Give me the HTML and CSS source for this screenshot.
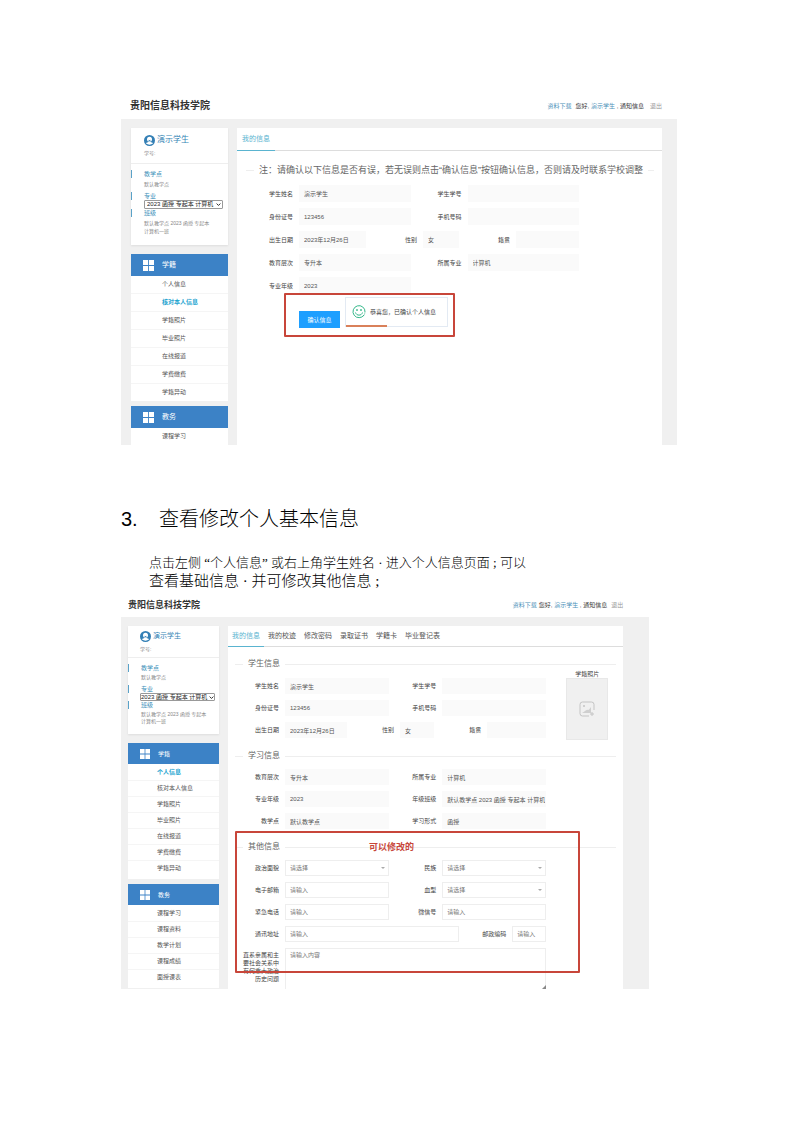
FILE: index.html
```html
<!DOCTYPE html>
<html lang="zh-CN">
<head>
    <meta charset="UTF-8">
    <meta name="viewport" content="width=device-width, initial-scale=1.0">
    <title>查看修改个人基本信息</title>
    <link rel="stylesheet" href="styles.css">
</head>
<body>

<!-- Confirm information -->
<section class="shot">
    <div class="header">
        <h2>贵阳信息科技学院</h2>
        <div class="top-links">
            <a href="#">资料下载</a>
            <span>您好, <a href="#">演示学生</a> , 通知信息</span>
            <a href="#" class="logout">退出</a>
        </div>
    </div>
    <div class="content">
        <div class="sidebar">
            <div class="user-card">
                <div class="user-top">
                    <div class="user-name">
                        <svg class="avatar" viewBox="0 0 22 22"><circle cx="11" cy="11" r="11" fill="#337fb5"/><circle cx="11" cy="8.500" r="5" fill="#fff"/><path d="M4 17c1-4 13-4 14 0-4 3-10 3-14 0z" fill="#fff"/><path d="M8 9.500c2 .5 4 .5 6 0-1 3-5 3-6 0z" fill="#337fb5"/></svg>
                        演示学生
                    </div>
                    <p>学号:</p>
                </div>
                <div class="user-info">
                    <h4>教学点</h4>
                    <p>默认教学点</p>
                    <h4><label for="major1">专业</label></h4>
                    <div class="major">
                        <select id="major1"><option>2023 函授 专起本 计算机</option></select>
                        <svg viewBox="0 0 8 8"><path d="M1 2.500l3 3 3-3" fill="none" stroke="#222" stroke-width="1.500"/></svg>
                    </div>
                    <h4 class="class-title">班级</h4>
                    <p class="class-name">默认教学点 2023 函授 专起本<br>计算机一班</p>
                </div>
            </div>
            <div class="menu">
                <h3><svg viewBox="0 0 10 10"><path d="M0 0h4.600v4.600H0zM5.400 0H10v4.600H5.400zM0 5.400h4.600V10H0zM5.400 5.400H10V10H5.400z" fill="#fff"/></svg>学籍</h3>
                <ul>
                    <li><a href="#">个人信息</a></li>
                    <li><a href="#" class="active">核对本人信息</a></li>
                    <li><a href="#">学籍照片</a></li>
                    <li><a href="#">毕业照片</a></li>
                    <li><a href="#">在线报道</a></li>
                    <li><a href="#">学费缴费</a></li>
                    <li><a href="#">学籍异动</a></li>
                </ul>
            </div>
            <div class="menu">
                <h3><svg viewBox="0 0 10 10"><path d="M0 0h4.600v4.600H0zM5.400 0H10v4.600H5.400zM0 5.400h4.600V10H0zM5.400 5.400H10V10H5.400z" fill="#fff"/></svg>教务</h3>
                <ul>
                    <li><a href="#">课程学习</a></li>
                </ul>
            </div>
        </div>
        <div class="main">
            <div class="tabs">
                <a href="#" class="active">我的信息</a>
            </div>
            <div class="legend notice"><span>注：请确认以下信息是否有误，若无误则点击“确认信息”按钮确认信息，否则请及时联系学校调整</span></div>
            <form class="form">
                <div class="row">
                    <label for="c-name">学生姓名</label><input id="c-name" type="text" value="演示学生" readonly>
                    <label for="c-no">学生学号</label><input id="c-no" type="text" readonly>
                </div>
                <div class="row">
                    <label for="c-card">身份证号</label><input id="c-card" type="text" value="123456" readonly>
                    <label for="c-phone">手机号码</label><input id="c-phone" type="text" readonly>
                </div>
                <div class="row row-three">
                    <label for="c-birth">出生日期</label><input id="c-birth" type="text" value="2023年12月26日" readonly>
                    <label for="c-sex">性别</label><input id="c-sex" type="text" value="女" readonly>
                    <label for="c-place">籍贯</label><input id="c-place" type="text" readonly>
                </div>
                <div class="row">
                    <label for="c-level">教育层次</label><input id="c-level" type="text" value="专升本" readonly>
                    <label for="c-major">所属专业</label><input id="c-major" type="text" value="计算机" readonly>
                </div>
                <div class="row">
                    <label for="c-grade">专业年级</label><input id="c-grade" type="text" value="2023" readonly>
                </div>
                <div class="confirm">
                    <button type="button">确认信息</button>
                    <div class="toast">
                        <svg viewBox="0 0 28 28" fill="none" stroke="#35b88a" stroke-width="2"><path d="M24 20A12 12 0 1 1 26 14"/><path d="M26 14a12 12 0 0 1-4 9" stroke-width="1"/><path d="M7 15c2 7 12 7 14 0" /><circle cx="10" cy="10" r="1" fill="#35b88a"/><circle cx="18" cy="10" r="1" fill="#35b88a"/></svg>
                        恭喜您，已确认个人信息
                    </div>
                    <div class="mark mark-confirm"></div>
                </div>
            </form>
        </div>
    </div>
</section>

<h1><span>3.</span>查看修改个人基本信息</h1>
<div class="intro">
    <p>点击左侧 “个人信息” 或右上角学生姓名 · 进入个人信息页面 ; 可以</p>
    <p class="wide">查看基础信息 · 并可修改其他信息 ;</p>
</div>

<!-- Personal information -->
<section class="shot shot-small">
    <div class="header">
        <h2>贵阳信息科技学院</h2>
        <div class="top-links">
            <a href="#">资料下载</a>
            <span>您好, <a href="#">演示学生</a> , 通知信息</span>
            <a href="#" class="logout">退出</a>
        </div>
    </div>
    <div class="content">
        <div class="sidebar">
            <div class="user-card">
                <div class="user-top">
                    <div class="user-name">
                        <svg class="avatar" viewBox="0 0 22 22"><circle cx="11" cy="11" r="11" fill="#337fb5"/><circle cx="11" cy="8.500" r="5" fill="#fff"/><path d="M4 17c1-4 13-4 14 0-4 3-10 3-14 0z" fill="#fff"/><path d="M8 9.500c2 .5 4 .5 6 0-1 3-5 3-6 0z" fill="#337fb5"/></svg>
                        演示学生
                    </div>
                    <p>学号:</p>
                </div>
                <div class="user-info">
                    <h4>教学点</h4>
                    <p>默认教学点</p>
                    <h4><label for="major2">专业</label></h4>
                    <div class="major">
                        <select id="major2"><option>2023 函授 专起本 计算机</option></select>
                        <svg viewBox="0 0 8 8"><path d="M1 2.500l3 3 3-3" fill="none" stroke="#222" stroke-width="1.500"/></svg>
                    </div>
                    <h4 class="class-title">班级</h4>
                    <p class="class-name">默认教学点 2023 函授 专起本<br>计算机一班</p>
                </div>
            </div>
            <div class="menu">
                <h3><svg viewBox="0 0 10 10"><path d="M0 0h4.600v4.600H0zM5.400 0H10v4.600H5.400zM0 5.400h4.600V10H0zM5.400 5.400H10V10H5.400z" fill="#fff"/></svg>学籍</h3>
                <ul>
                    <li><a href="#" class="active">个人信息</a></li>
                    <li><a href="#">核对本人信息</a></li>
                    <li><a href="#">学籍照片</a></li>
                    <li><a href="#">毕业照片</a></li>
                    <li><a href="#">在线报道</a></li>
                    <li><a href="#">学费缴费</a></li>
                    <li><a href="#">学籍异动</a></li>
                </ul>
            </div>
            <div class="menu">
                <h3><svg viewBox="0 0 10 10"><path d="M0 0h4.600v4.600H0zM5.400 0H10v4.600H5.400zM0 5.400h4.600V10H0zM5.400 5.400H10V10H5.400z" fill="#fff"/></svg>教务</h3>
                <ul>
                    <li><a href="#">课程学习</a></li>
                    <li><a href="#">课程资料</a></li>
                    <li><a href="#">教学计划</a></li>
                    <li><a href="#">课程成绩</a></li>
                    <li><a href="#">面授课表</a></li>
                </ul>
            </div>
        </div>
        <div class="main">
            <div class="tabs">
                <a href="#" class="active">我的信息</a>
                <a href="#">我的校迹</a>
                <a href="#">修改密码</a>
                <a href="#">录取证书</a>
                <a href="#">学籍卡</a>
                <a href="#">毕业登记表</a>
            </div>
            <div class="legend"><span>学生信息</span></div>
            <div class="student">
                <form class="form">
                    <div class="row">
                        <label for="p-name">学生姓名</label><input id="p-name" type="text" value="演示学生" readonly>
                        <label for="p-no">学生学号</label><input id="p-no" type="text" readonly>
                    </div>
                    <div class="row">
                        <label for="p-card">身份证号</label><input id="p-card" type="text" value="123456" readonly>
                        <label for="p-phone">手机号码</label><input id="p-phone" type="text" readonly>
                    </div>
                    <div class="row row-three">
                        <label for="p-birth">出生日期</label><input id="p-birth" type="text" value="2023年12月26日" readonly>
                        <label for="p-sex">性别</label><input id="p-sex" type="text" value="女" readonly>
                        <label for="p-place">籍贯</label><input id="p-place" type="text" readonly>
                    </div>
                </form>
                <div class="photo">
                    <p>学籍照片</p>
                    <div class="photo-box">
                        <svg viewBox="0 0 16 16" fill="none" stroke="#c4c4c4"><path d="M15 9V3.500A2.500 2.500 0 0 0 12.500 1h-9A2.500 2.500 0 0 0 1 3.500v9A2.500 2.500 0 0 0 3.500 15H10"/><path d="M3 12c3-1 4-4 6-3 1 0 2-2 3-3v6z" fill="#cfcfcf" stroke="none"/><circle cx="5" cy="5" r="1" fill="#c4c4c4" stroke="none"/><path d="M13 11v4M11 13h4"/></svg>
                    </div>
                </div>
            </div>
            <div class="legend"><span>学习信息</span></div>
            <form class="form">
                <div class="row">
                    <label for="p-level">教育层次</label><input id="p-level" type="text" value="专升本" readonly>
                    <label for="p-major">所属专业</label><input id="p-major" type="text" value="计算机" readonly>
                </div>
                <div class="row">
                    <label for="p-grade">专业年级</label><input id="p-grade" type="text" value="2023" readonly>
                    <label for="p-class">年级班级</label><input id="p-class" type="text" value="默认教学点 2023 函授 专起本 计算机一班" readonly>
                </div>
                <div class="row">
                    <label for="p-site">教学点</label><input id="p-site" type="text" value="默认教学点" readonly>
                    <label for="p-mode">学习形式</label><input id="p-mode" type="text" value="函授" readonly>
                </div>
            </form>
            <div class="other">
                <div class="legend"><span>其他信息</span></div>
                <form class="form">
                    <div class="row">
                        <label for="o-party">政治面貌</label>
                        <div class="drop"><select id="o-party"><option>请选择</option></select></div>
                        <label for="o-nation">民族</label>
                        <div class="drop"><select id="o-nation"><option>请选择</option></select></div>
                    </div>
                    <div class="row">
                        <label for="o-mail">电子邮箱</label><input id="o-mail" type="text" placeholder="请输入">
                        <label for="o-blood">血型</label>
                        <div class="drop"><select id="o-blood"><option>请选择</option></select></div>
                    </div>
                    <div class="row">
                        <label for="o-tel">紧急电话</label><input id="o-tel" type="text" placeholder="请输入">
                        <label for="o-wx">微信号</label><input id="o-wx" type="text" placeholder="请输入">
                    </div>
                    <div class="row row-address">
                        <label for="o-addr">通讯地址</label><input id="o-addr" type="text" placeholder="请输入">
                        <label for="o-zip">邮政编码</label><input id="o-zip" type="text" placeholder="请输入">
                    </div>
                    <div class="row row-text">
                        <label for="o-history">直系亲属和主要社会关系中有何重大政治历史问题</label>
                        <div class="area"><textarea id="o-history" placeholder="请输入内容"></textarea></div>
                    </div>
                </form>
                <div class="mark mark-other"></div>
                <div class="mark-text">可以修改的</div>
            </div>
        </div>
    </div>
</section>

</body>
</html>
```

FILE: styles.css
```css
* {
    box-sizing: border-box;
}
body {
    font-family: "Liberation Sans", "Noto Sans CJK SC", sans-serif;
    font-size: 6px;
    line-height: 8px;
    color: #555;
    background: #fff;
    margin: 0;
    padding: 93px 116px 60px 121px;
}
h1, h2, h3, h4, p, ul {
    margin: 0;
    padding: 0;
}
a {
    color: inherit;
    text-decoration: none;
}
input, select, textarea, button {
    font: inherit;
    color: #555;
    margin: 0;
}

/* page header */
.header {
    display: flex;
    justify-content: space-between;
    align-items: center;
    height: 26px;
    padding: 0 15px 0 9px;
}
.header h2 {
    font-size: 10px;
    line-height: 12px;
    color: #333;
}
.top-links {
    display: flex;
    gap: 4px;
    color: #333;
}
.top-links a {
    color: #4a90b8;
}
.top-links .logout {
    color: #999;
    margin-left: 2px;
}
.content {
    display: flex;
    gap: 9px;
    background: #f0f0f0;
    padding: 9px 15px 0 10px;
}

/* sidebar */
.sidebar {
    flex: 0 0 97px;
}
.user-card {
    background: #fff;
    box-shadow: 0 1px 2px #ddd;
    margin-bottom: 9px;
    color: #888;
}
.user-top {
    padding: 6px 13px;
    border-bottom: 1px solid #eee;
}
.user-name {
    display: flex;
    align-items: center;
    gap: 2px;
    font-size: 8px;
    line-height: 12px;
    color: #3584b5;
}
.avatar {
    width: 11px;
    height: 11px;
}
.user-top p {
    font-size: 5px;
    margin-top: 3px;
}
.user-info {
    padding: 6px 0 10px;
}
.user-info h4 {
    font-weight: normal;
    color: #3a8fb9;
    padding-left: 12px;
    border-left: 1px solid #5aa2c8;
}
.user-info p {
    font-size: 5px;
    line-height: 7px;
    margin: 3px 0 4px 13px;
}
.user-info .class-name {
    line-height: 8px;
    margin: 2px 0 0 13px;
}
.major {
    position: relative;
    margin: 0 5px 0 13px;
}
.major select {
    display: block;
    appearance: none;
    width: 100%;
    height: 9px;
    line-height: 7px;
    padding: 0 0 0 2px;
    color: #222;
    background: #fff;
    border: 1px solid #999;
    border-radius: 1px;
}
.major svg {
    position: absolute;
    right: 2px;
    top: 2px;
    width: 5px;
    height: 5px;
}
.menu {
    margin-bottom: 5px;
}
.menu:last-child {
    margin-bottom: 0;
}
.menu h3 {
    display: flex;
    align-items: center;
    gap: 8px;
    height: 22px;
    padding-left: 12px;
    background: #3c82c6;
    color: #fff;
    font-size: 7px;
    font-weight: normal;
}
.menu h3 svg {
    width: 11px;
    height: 11px;
}
.menu ul {
    list-style: none;
    background: #fff;
}
.menu li {
    border-bottom: 1px solid #f5f5f5;
}
.menu li:last-child {
    border-bottom: none;
}
.menu li a {
    display: block;
    padding-left: 31px;
    line-height: 17px;
}
.menu .active {
    color: #1ea4cf;
    font-weight: bold;
}

/* main panel */
.main {
    flex: 1;
    min-width: 0;
    background: #fff;
}
.tabs {
    display: flex;
    height: 23px;
    border-bottom: 1px solid #ddd;
}
.tabs a {
    font-size: 7px;
    line-height: 22px;
    height: 23px;
    padding: 0 5px;
}
.tabs .active {
    color: #5ab4d0;
    border-bottom: 1px solid #5ab4d0;
}
.legend {
    display: flex;
    align-items: center;
    gap: 5px;
    font-size: 8px;
    line-height: 12px;
    margin: 12px 7px 7px;
    color: #666;
}
.legend::before, .legend::after {
    content: "";
    height: 1px;
    background: #eee;
}
.legend::before {
    width: 8px;
}
.legend::after {
    flex: 1;
}
.notice {
    font-size: 9px;
    margin: 13px 8px 9px 9px;
    white-space: nowrap;
}

/* forms */
.form {
    display: grid;
    gap: 6px;
    width: 76%;
    margin-left: 19px;
}
.row {
    display: grid;
    grid-template-columns: 37px 1fr 45px 1fr;
    gap: 6px;
    align-items: center;
}
.row-three {
    grid-template-columns: 37px 67fr 45px 36fr 45px 63fr;
}
.row label {
    text-align: right;
    color: #444;
}
.row input, .row select, .row textarea {
    display: block;
    width: 100%;
    min-width: 0;
    height: 17px;
    padding: 0 0 0 4px;
    border: 1px solid #eee;
    border-radius: 0;
    background: #fff;
    outline: none;
}
.row input[readonly] {
    background: #fafafa;
    border-color: #fafafa;
}
.row input::placeholder, .row textarea::placeholder {
    color: #777;
}
.confirm {
    position: relative;
    padding: 11px 0 0 43px;
}
.confirm button {
    display: block;
    width: 41px;
    height: 17px;
    padding: 0;
    border: none;
    background: #1e9fff;
    color: #fff;
    cursor: pointer;
}
.toast {
    position: absolute;
    left: 89px;
    top: -3px;
    display: flex;
    align-items: center;
    gap: 4px;
    width: 103px;
    height: 30px;
    padding-left: 6px;
    border: 1px solid #e3eaf3;
    background: #fff;
    white-space: nowrap;
    color: #444;
}
.toast svg {
    width: 14px;
    height: 14px;
}
.toast::after {
    content: "";
    position: absolute;
    left: 0;
    bottom: -1px;
    width: 41px;
    height: 2px;
    background: #d9805a;
}
.mark {
    position: absolute;
    border: 2px solid #c8463a;
    border-radius: 1px;
    pointer-events: none;
}
.mark-confirm {
    left: 28px;
    top: -7px;
    width: 171px;
    height: 44px;
}

/* text between the two screens */
h1 {
    display: flex;
    font-size: 20px;
    line-height: 28px;
    font-weight: 300;
    color: #000;
    margin-top: 60px;
}
h1 span {
    font-family: "Liberation Sans Narrow", "Liberation Sans", sans-serif;
    width: 38px;
}
.intro {
    font-family: "Liberation Serif", "Noto Sans CJK SC", serif;
    margin: 20px 0 1px 28px;
    color: #000;
    font-size: 13px;
    line-height: 19px;
    font-weight: 300;
}
.intro .wide {
    font-size: 15px;
}

/* smaller screen */
.shot-small {
    width: 95%;
}
.shot-small .header {
    height: 25px;
    padding: 0 26px 0 7px;
}
.shot-small .header h2 {
    font-size: 9px;
}
.shot-small .top-links {
    gap: 2px;
}
.shot-small .content {
    padding: 9px 26px 0 7px;
}
.shot-small .sidebar {
    flex-basis: 91px;
}
.shot-small .user-top {
    padding: 4px 12px;
}
.shot-small .user-name {
    font-size: 7px;
}
.shot-small .user-info {
    padding-bottom: 9px;
}
.shot-small .user-info p {
    margin-top: 2px;
}
.shot-small .user-info .class-name {
    line-height: 7px;
}
.shot-small .major select {
    height: 8px;
    line-height: 6px;
    padding-left: 0;
}
.shot-small .major svg {
    right: 1px;
}
.shot-small .major {
    margin: 0 4px 0 12px;
}
.shot-small .menu h3 {
    height: 21px;
    font-size: 6px;
}
.shot-small .menu h3 svg {
    width: 10px;
    height: 10px;
}
.shot-small .menu ul {
    padding: 1px 0 2px;
}
.shot-small .menu li a {
    line-height: 15px;
    padding-left: 29px;
}
.shot-small .menu li:last-child {
    border-bottom: 1px solid #fff;
}
.shot-small .tabs {
    height: 21px;
}
.shot-small .tabs a {
    line-height: 20px;
    height: 21px;
    padding: 0 4px;
}
.shot-small .form {
    width: 77%;
    margin-left: 14px;
}
.shot-small .row {
    grid-template-columns: 37px 1fr 41px 1fr;
}
.shot-small .row-three {
    grid-template-columns: 37px 62fr 41px 34fr 41px 59fr;
}
.shot-small .row-address {
    grid-template-columns: 37px 174fr 41px 34fr;
}
.shot-small .row-text {
    grid-template-columns: 37px 1fr;
    align-items: start;
}
.shot-small .row input, .shot-small .row select {
    height: 16px;
}
.shot-small .tabs + .legend {
    margin: 11px 7px 0;
}
.student {
    display: flex;
    align-items: flex-start;
}
.student .form {
    flex: none;
    padding-top: 8px;
}
.photo {
    width: 42px;
    margin: 0 0 -2px 20px;
    text-align: center;
    color: #444;
}
.photo-box {
    display: flex;
    align-items: center;
    justify-content: center;
    height: 62px;
    background: #f0f0f0;
    border: 1px solid #e8e8e8;
}
.photo-box svg {
    width: 16px;
    height: 16px;
}
.other {
    position: relative;
}
.drop {
    position: relative;
}
.drop select {
    appearance: none;
    color: #777;
}
.drop::after {
    content: "";
    position: absolute;
    right: 4px;
    top: 7px;
    border: 2px solid transparent;
    border-top-color: #aaa;
}
.row-text label {
    padding-top: 3px;
    word-break: break-all;
}
.area {
    position: relative;
}
.area textarea {
    height: 41px;
    padding-top: 2px;
    border-bottom: none;
    resize: none;
}
.area::after {
    content: "";
    position: absolute;
    right: 0;
    bottom: 0;
    border: 2px solid;
    border-color: transparent #888 #888 transparent;
}
.mark-other {
    left: 7px;
    top: -10px;
    width: 345px;
    height: 142px;
}
.mark-text {
    position: absolute;
    left: 141px;
    top: 0;
    font-size: 9px;
    line-height: 12px;
    font-weight: bold;
    color: #c8463a;
}
```
